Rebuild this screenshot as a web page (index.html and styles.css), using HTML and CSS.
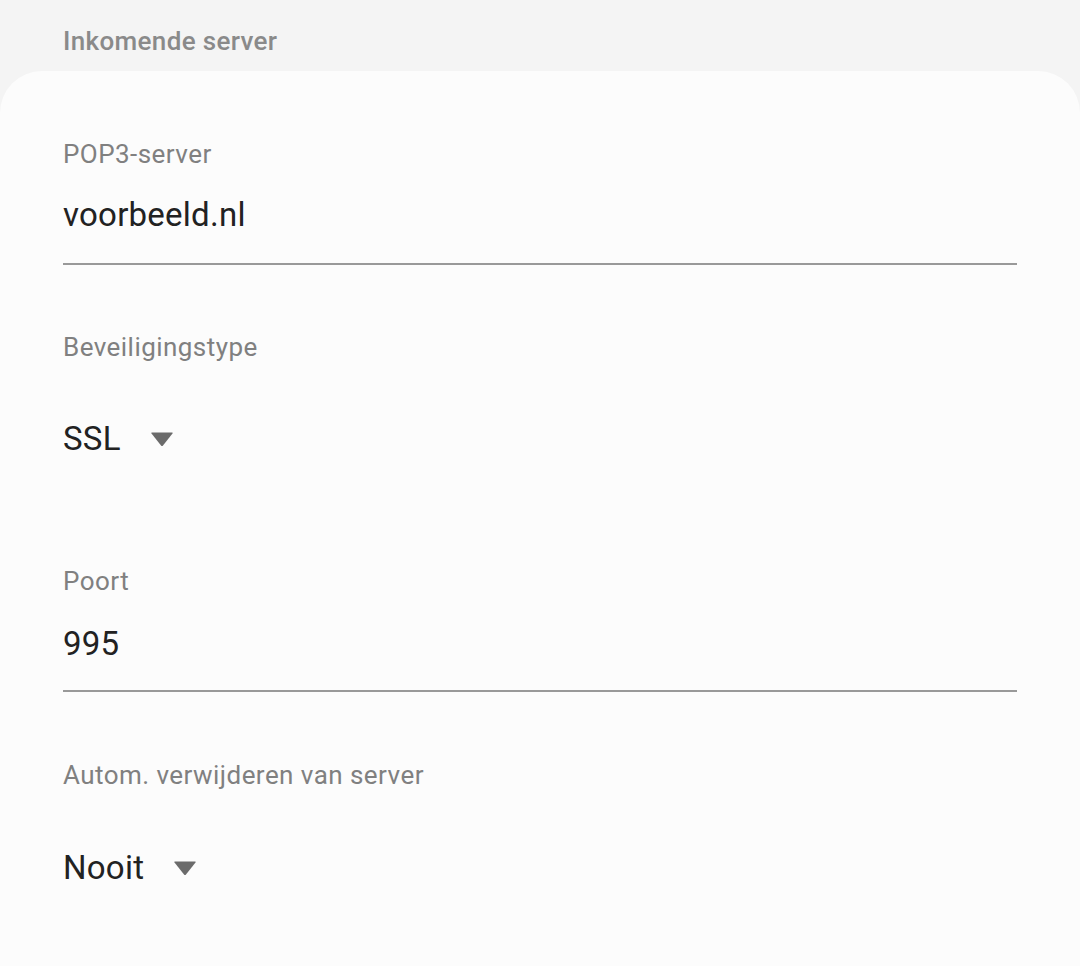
FILE: index.html
```html
<!DOCTYPE html>
<html lang="nl">
<head>
<meta charset="utf-8">
<link rel="stylesheet" href="styles.css">
</head>
<body>
  <div class="section-title">Inkomende server</div>
  <div class="card">
    <div class="field text-field server-field">
      <div class="label">POP3-server</div>
      <div class="value">voorbeeld.nl</div>
      <div class="underline"></div>
    </div>
    <div class="field dropdown-field security-field">
      <div class="label">Beveiligingstype</div>
      <div class="value dropdown"><span>SSL</span><svg class="arrow" viewBox="0 0 24 16" width="24" height="16"><path d="M2 1.5 H22 Q23.2 1.5 22.5 2.6 L13 14.4 Q12 15.6 11 14.4 L1.5 2.6 Q0.8 1.5 2 1.5 Z"/></svg></div>
    </div>
    <div class="field text-field port-field">
      <div class="label">Poort</div>
      <div class="value">995</div>
      <div class="underline"></div>
    </div>
    <div class="field dropdown-field delete-field">
      <div class="label">Autom. verwijderen van server</div>
      <div class="value dropdown"><span>Nooit</span><svg class="arrow" viewBox="0 0 24 16" width="24" height="16"><path d="M2 1.5 H22 Q23.2 1.5 22.5 2.6 L13 14.4 Q12 15.6 11 14.4 L1.5 2.6 Q0.8 1.5 2 1.5 Z"/></svg></div>
    </div>
  </div>
</body>
</html>
```
FILE: styles.css
```css
html, body {
  margin: 0;
  padding: 0;
}
body {
  background: #f4f4f4;
  font-family: Roboto, "Liberation Sans", sans-serif;
  width: 1080px;
  height: 966px;
  overflow: hidden;
}
.section-title {
  padding: 26px 0 15px 63px;
  font-size: 26px;
  line-height: 30px;
  font-weight: 500;
  letter-spacing: 0.35px;
  color: #8a8a8a;
}
.card {
  background: #fcfcfc;
  border-radius: 42px 42px 0 0;
  padding: 68px 63px 0 63px;
  min-height: 900px;
  box-sizing: border-box;
}
.label {
  font-size: 26px;
  line-height: 30px;
  letter-spacing: 0.45px;
  color: #808080;
}
.value {
  font-size: 33px;
  line-height: 40px;
  letter-spacing: 0.25px;
  color: #222222;
}
.underline {
  height: 2px;
  background: #999999;
}
.dropdown {
  display: flex;
  align-items: center;
  gap: 29px;
}
.arrow {
  fill: #6b6b6b;
  display: block;
}

/* POP3-server */
.server-field { margin-bottom: 67px; }
.server-field .value { margin-top: 26px; }
.server-field .underline { margin-top: 28px; }

/* Beveiligingstype */
.security-field { margin-bottom: 107px; }
.security-field .value { margin-top: 57px; }

/* Poort */
.port-field { margin-bottom: 68px; }
.port-field .value { margin-top: 28px; }
.port-field .underline { margin-top: 26px; }

/* Autom. verwijderen */
.delete-field .value { margin-top: 58px; }
```
